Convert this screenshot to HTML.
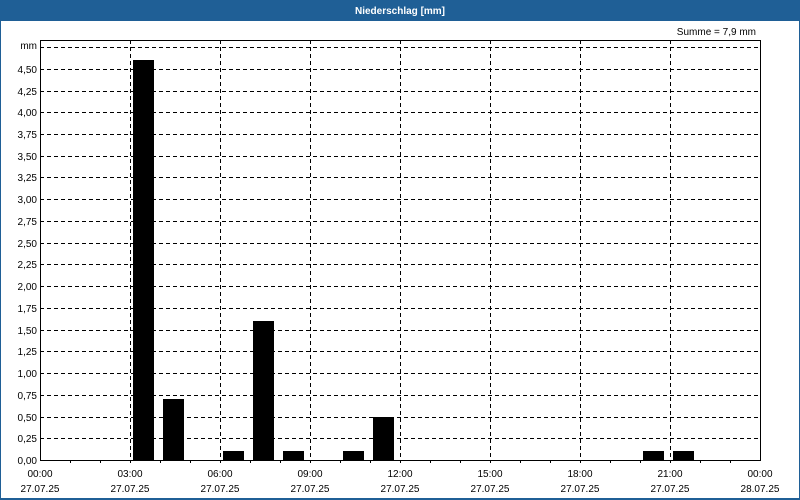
<!DOCTYPE html>
<html><head><meta charset="utf-8"><style>
html,body{margin:0;padding:0;width:800px;height:500px;overflow:hidden;background:#fff}
svg{display:block}
text{font-family:"Liberation Sans","DejaVu Sans",sans-serif;font-size:10px;fill:#000}
</style></head><body>
<svg width="800" height="500" xmlns="http://www.w3.org/2000/svg">
<rect x="0" y="0" width="800" height="500" fill="#1f5f96"/>
<rect x="1" y="21" width="798" height="477" fill="#fff"/>
<text x="400" y="14" text-anchor="middle" fill="#fff" style="fill:#fff;font-weight:bold;font-size:10px">Niederschlag [mm]</text>
<text x="756" y="35" text-anchor="end">Summe = 7,9 mm</text>
<g stroke="#000" stroke-width="1" stroke-dasharray="4 3" shape-rendering="crispEdges">
<line x1="40" x2="760" y1="47.5" y2="47.5"/>
<line x1="40" x2="760" y1="69.5" y2="69.5"/><line x1="40" x2="760" y1="91.5" y2="91.5"/>
<line x1="40" x2="760" y1="112.5" y2="112.5"/><line x1="40" x2="760" y1="134.5" y2="134.5"/>
<line x1="40" x2="760" y1="156.5" y2="156.5"/><line x1="40" x2="760" y1="177.5" y2="177.5"/>
<line x1="40" x2="760" y1="199.5" y2="199.5"/><line x1="40" x2="760" y1="221.5" y2="221.5"/>
<line x1="40" x2="760" y1="243.5" y2="243.5"/><line x1="40" x2="760" y1="264.5" y2="264.5"/>
<line x1="40" x2="760" y1="286.5" y2="286.5"/><line x1="40" x2="760" y1="308.5" y2="308.5"/>
<line x1="40" x2="760" y1="330.5" y2="330.5"/><line x1="40" x2="760" y1="351.5" y2="351.5"/>
<line x1="40" x2="760" y1="373.5" y2="373.5"/><line x1="40" x2="760" y1="395.5" y2="395.5"/>
<line x1="40" x2="760" y1="417.5" y2="417.5"/><line x1="40" x2="760" y1="438.5" y2="438.5"/>
<line x1="130.5" x2="130.5" y1="40" y2="460"/><line x1="220.5" x2="220.5" y1="40" y2="460"/>
<line x1="310.5" x2="310.5" y1="40" y2="460"/><line x1="400.5" x2="400.5" y1="40" y2="460"/>
<line x1="490.5" x2="490.5" y1="40" y2="460"/><line x1="580.5" x2="580.5" y1="40" y2="460"/>
<line x1="670.5" x2="670.5" y1="40" y2="460"/>
</g>
<g fill="#000">
<rect x="133" y="60" width="21" height="400"/>
<rect x="163" y="399" width="21" height="61"/>
<rect x="223" y="451" width="21" height="9"/>
<rect x="253" y="321" width="21" height="139"/>
<rect x="283" y="451" width="21" height="9"/>
<rect x="343" y="451" width="21" height="9"/>
<rect x="373" y="417" width="21" height="43"/>
<rect x="643" y="451" width="21" height="9"/>
<rect x="673" y="451" width="21" height="9"/>
</g>
<rect x="40.5" y="40.5" width="720" height="420" fill="none" stroke="#000" shape-rendering="crispEdges"/>
<g stroke="#000" shape-rendering="crispEdges">
<line x1="70.5" x2="70.5" y1="460" y2="463"/><line x1="100.5" x2="100.5" y1="460" y2="463"/>
<line x1="130.5" x2="130.5" y1="460" y2="463"/><line x1="160.5" x2="160.5" y1="460" y2="463"/>
<line x1="190.5" x2="190.5" y1="460" y2="463"/><line x1="220.5" x2="220.5" y1="460" y2="463"/>
<line x1="250.5" x2="250.5" y1="460" y2="463"/><line x1="280.5" x2="280.5" y1="460" y2="463"/>
<line x1="310.5" x2="310.5" y1="460" y2="463"/><line x1="340.5" x2="340.5" y1="460" y2="463"/>
<line x1="370.5" x2="370.5" y1="460" y2="463"/><line x1="400.5" x2="400.5" y1="460" y2="463"/>
<line x1="430.5" x2="430.5" y1="460" y2="463"/><line x1="460.5" x2="460.5" y1="460" y2="463"/>
<line x1="490.5" x2="490.5" y1="460" y2="463"/><line x1="520.5" x2="520.5" y1="460" y2="463"/>
<line x1="550.5" x2="550.5" y1="460" y2="463"/><line x1="580.5" x2="580.5" y1="460" y2="463"/>
<line x1="610.5" x2="610.5" y1="460" y2="463"/><line x1="640.5" x2="640.5" y1="460" y2="463"/>
<line x1="670.5" x2="670.5" y1="460" y2="463"/><line x1="700.5" x2="700.5" y1="460" y2="463"/>
<line x1="730.5" x2="730.5" y1="460" y2="463"/>
</g>
<g text-anchor="end">
<text x="37" y="49">mm</text>
<text x="37" y="73">4,50</text><text x="37" y="95">4,25</text><text x="37" y="116">4,00</text>
<text x="37" y="138">3,75</text><text x="37" y="160">3,50</text><text x="37" y="181">3,25</text>
<text x="37" y="203">3,00</text><text x="37" y="225">2,75</text><text x="37" y="247">2,50</text>
<text x="37" y="268">2,25</text><text x="37" y="290">2,00</text><text x="37" y="312">1,75</text>
<text x="37" y="334">1,50</text><text x="37" y="355">1,25</text><text x="37" y="377">1,00</text>
<text x="37" y="399">0,75</text><text x="37" y="421">0,50</text><text x="37" y="442">0,25</text>
<text x="37" y="464">0,00</text>
</g>
<g text-anchor="middle">
<text x="40" y="477">00:00</text><text x="40" y="492">27.07.25</text>
<text x="130" y="477">03:00</text><text x="130" y="492">27.07.25</text>
<text x="220" y="477">06:00</text><text x="220" y="492">27.07.25</text>
<text x="310" y="477">09:00</text><text x="310" y="492">27.07.25</text>
<text x="400" y="477">12:00</text><text x="400" y="492">27.07.25</text>
<text x="490" y="477">15:00</text><text x="490" y="492">27.07.25</text>
<text x="580" y="477">18:00</text><text x="580" y="492">27.07.25</text>
<text x="670" y="477">21:00</text><text x="670" y="492">27.07.25</text>
<text x="760" y="477">00:00</text><text x="760" y="492">28.07.25</text>
</g>
</svg>
</body></html>
